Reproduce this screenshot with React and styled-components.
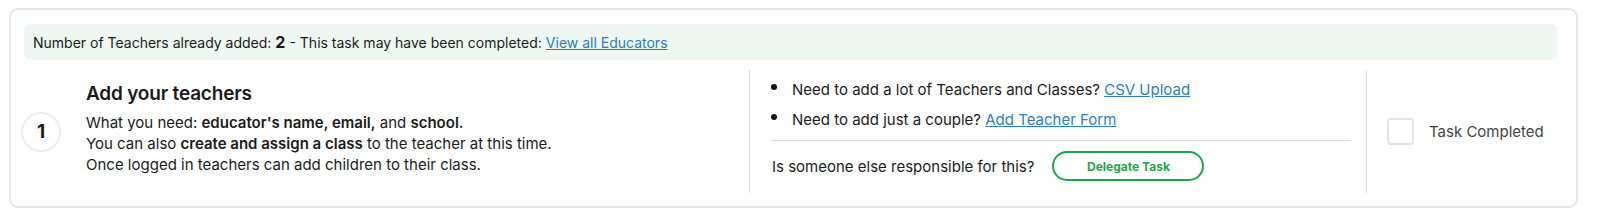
import styled, { createGlobalStyle } from "styled-components";

const GlobalStyle = createGlobalStyle`
    body {
        margin: 0;
        background: #ffffff;
        font-family: Inter, "Liberation Sans", Arial, sans-serif;
        color: #1b1b1b;
    }
`;

const Page = styled.div`
    padding: 8px 19px 10px 9px;
`;

const Card = styled.div`
    border: 2px solid #e6e6e6;
    border-radius: 9px;
    padding: 14px 19px 13px 13px;
    display: flex;
    flex-direction: column;
    gap: 10px;
`;

const Banner = styled.div`
    background: #eef7f2;
    border-radius: 6px;
    height: 36px;
    display: flex;
    align-items: center;
    padding: 0 9px;
    font-size: 14px;
`;

const Count = styled.b`
    font-size: 16px;
    margin: 0 4px 0 4px;
`;

const Link = styled.a`
    color: #2b7fc0;
    text-decoration: underline;
    cursor: pointer;
    margin-left: ${(p) => (p.$gap ? "4px" : "0")};
`;

const Body = styled.div`
    display: grid;
    grid-template-columns: 725px 1fr 191px;
    height: 123px;
`;

const Column = styled.div`
    display: flex;
    align-items: center;
    border-left: ${(p) => (p.$divided ? "1px solid #dcdcdc" : "none")};
    padding-left: ${(p) => p.$pad || "0"};
    padding-right: ${(p) => p.$padRight || "0"};
`;

const StepNumber = styled.div`
    width: 36px;
    height: 36px;
    flex-shrink: 0;
    border: 2px solid #ededed;
    border-radius: 50%;
    display: flex;
    align-items: center;
    justify-content: center;
    font-size: 19px;
    font-weight: 700;
    margin-left: -3px;
    margin-right: 25px;
`;

const Info = styled.div`
    display: flex;
    flex-direction: column;
    margin-top: -6px;
`;

const Heading = styled.h3`
    margin: 0 0 7px;
    font-size: 19px;
    font-weight: 600;
    letter-spacing: -0.2px;
`;

const Line = styled.p`
    margin: 0;
    font-size: 15px;
    line-height: 21px;
    & b {
        font-weight: 600;
    }
`;

const Options = styled.div`
    flex: 1;
    display: flex;
    flex-direction: column;
    margin-top: -3px;
`;

const Bullets = styled.ul`
    margin: 0;
    padding: 0 0 10px 0;
    list-style: none;
    border-bottom: 1px solid #dcdcdc;
    display: flex;
    flex-direction: column;
    gap: 9px;
`;

const Bullet = styled.li`
    display: flex;
    align-items: center;
    font-size: 15px;
    line-height: 21px;
    &::before {
        content: "";
        width: 6px;
        height: 6px;
        border-radius: 50%;
        background: #111;
        margin: -6px 15px 0 -1px;
        flex-shrink: 0;
    }
`;

const DelegateRow = styled.div`
    display: flex;
    align-items: center;
    gap: 18px;
    font-size: 15px;
    padding-top: 10px;
`;

const DelegateButton = styled.button`
    width: 152px;
    height: 30px;
    border: 2px solid #1ea54c;
    border-radius: 15px;
    background: #ffffff;
    color: #1ea54c;
    font-family: inherit;
    font-weight: 700;
    font-size: 12px;
    cursor: pointer;
`;

const Check = styled.label`
    display: flex;
    align-items: center;
    gap: 15px;
    font-size: 15px;
    color: #444444;
    cursor: pointer;
`;

const Box = styled.span`
    width: 23px;
    height: 23px;
    border: 2px solid #e4e4e4;
    border-radius: 4px;
`;

function App() {
    return (
        <>
            <GlobalStyle />
            <Page>
                <Card>
                    <Banner>
                        Number of Teachers already added:
                        <Count>2</Count>- This task may have been completed:
                        <Link $gap>View all Educators</Link>
                    </Banner>
                    <Body>
                        <Column>
                            <StepNumber>1</StepNumber>
                            <Info>
                                <Heading>Add your teachers</Heading>
                                <Line>
                                    What you need: <b>educator's name, email,</b> and <b>school.</b>
                                </Line>
                                <Line>
                                    You can also <b>create and assign a class</b> to the teacher at this time.
                                </Line>
                                <Line>Once logged in teachers can add children to their class.</Line>
                            </Info>
                        </Column>
                        <Column $divided $pad="22px" $padRight="15px">
                            <Options>
                                <Bullets>
                                    <Bullet>
                                        Need to add a lot of Teachers and Classes?&nbsp;<Link>CSV Upload</Link>
                                    </Bullet>
                                    <Bullet>
                                        Need to add just a couple?&nbsp;<Link>Add Teacher Form</Link>
                                    </Bullet>
                                </Bullets>
                                <DelegateRow>
                                    Is someone else responsible for this?
                                    <DelegateButton>Delegate Task</DelegateButton>
                                </DelegateRow>
                            </Options>
                        </Column>
                        <Column $divided $pad="20px">
                            <Check>
                                <Box />
                                Task Completed
                            </Check>
                        </Column>
                    </Body>
                </Card>
            </Page>
        </>
    );
}

export default App;
